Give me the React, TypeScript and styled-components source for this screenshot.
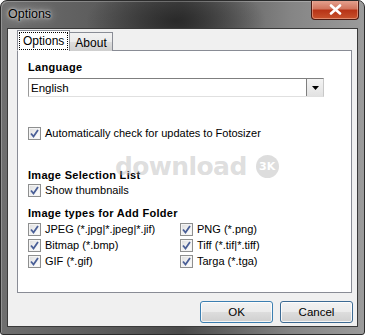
import React from "react";
import styled, { createGlobalStyle } from "styled-components";

const GlobalStyle = createGlobalStyle`
  html, body {
    margin: 0;
    padding: 0;
    background: #ffffff;
  }
  body {
    font-family: "Liberation Sans", Arial, sans-serif;
    font-size: 11px;
    color: #000;
  }
`;

const Window = styled.div`
  position: relative;
  box-sizing: border-box;
  width: 365px;
  height: 335px;
  display: flex;
  flex-direction: column;
  border: 1px solid #2b2b2b;
  border-radius: 7px 7px 3px 3px;
  overflow: hidden;
  background:
    radial-gradient(ellipse 90px 40px at 175px 20px, rgba(30, 30, 30, 0.75), rgba(30, 30, 30, 0) 100%),
    linear-gradient(90deg, #6f6f6f 0%, #5a5a5a 30%, #4a4a4a 50%, #858585 80%, #9b9b9b 100%);
  box-shadow: inset 1px 1px 0 rgba(255, 255, 255, 0.25);
`;

const TitleBar = styled.div`
  height: 27px;
  flex: none;
  display: flex;
  justify-content: space-between;
  align-items: flex-start;
`;

const Title = styled.span`
  margin: 6px 0 0 7px;
  font-family: "Liberation Sans", Arial, sans-serif;
  font-size: 12.5px;
  color: #000;
  text-shadow: 0 0 8px rgba(255, 255, 255, 0.9), 0 0 3px rgba(255, 255, 255, 0.9);
`;

const CloseButton = styled.div`
  width: 46px;
  height: 19px;
  margin: -1px 5px 0 0;
  display: flex;
  align-items: center;
  justify-content: center;
  border: 1px solid #4d1a12;
  border-top: none;
  border-radius: 0 0 4px 4px;
  background: linear-gradient(180deg, #e7a593 0%, #d2765f 45%, #b83417 55%, #c8522d 100%);
  box-shadow: inset 0 0 0 1px rgba(255, 210, 190, 0.45);
`;

const Client = styled.div`
  flex: 1;
  margin: 0 6px 7px 6px;
  display: flex;
  flex-direction: column;
  border: 1px solid #3a3a3a;
  background: #f0f0f0;
`;

const Tabs = styled.div`
  margin: 1px 5px 0 9px;
  display: flex;
  flex-direction: column;
`;

const TabStrip = styled.div`
  display: flex;
  align-items: flex-end;
  height: 21px;
  position: relative;
  z-index: 1;
`;

const Tab = styled.div<{ $active?: boolean }>`
  box-sizing: border-box;
  height: ${(p) => (p.$active ? "21px" : "19px")};
  padding: ${(p) => (p.$active ? "2px 2px 0 2px" : "3px 5px 0 5px")};
  border: 1px solid #898c95;
  border-bottom: ${(p) => (p.$active ? "1px solid #ffffff" : "none")};
  background: ${(p) =>
    p.$active
      ? "#ffffff"
      : "linear-gradient(180deg, #f2f2f2 0%, #ebebeb 50%, #dddddd 51%, #cfcfcf 100%)"};
  margin-left: ${(p) => (p.$active ? "0" : "-1px")};
  font-size: 12px;
  line-height: 14px;
`;

const FocusLabel = styled.span`
  display: block;
  padding: 0 3px;
  outline: 1px dotted #000;
  height: 16px;
  line-height: 16px;
`;

const Panel = styled.div`
  position: relative;
  box-sizing: border-box;
  height: 243px;
  margin-top: -1px;
  border: 1px solid #898c95;
  background: #ffffff;
  padding: 10px 0 0 10px;
  display: flex;
  flex-direction: column;
`;

const GroupLabel = styled.div<{ $top?: number }>`
  margin-top: ${(p) => p.$top ?? 0}px;
  font-weight: bold;
  font-size: 11px;
  line-height: 13px;
  letter-spacing: 0.3px;
`;

const Select = styled.div`
  box-sizing: border-box;
  width: 296px;
  height: 19px;
  margin-top: 4px;
  display: flex;
  border: 1px solid;
  border-color: #7f7f7f #c8c8c8 #e0e0e0 #9a9a9a;
  background: #ffffff;
`;

const SelectValue = styled.div`
  flex: 1;
  padding: 2px 0 0 2px;
  font-size: 11.5px;
  line-height: 14px;
`;

const SelectButton = styled.div`
  width: 16px;
  display: flex;
  align-items: center;
  justify-content: center;
  border-left: 1px solid #7f7f7f;
  background: linear-gradient(180deg, #f4f4f4 0%, #e2e2e2 100%);
`;

const CheckRow = styled.label<{ $top?: number }>`
  display: flex;
  align-items: center;
  gap: 4px;
  height: 16px;
  margin-top: ${(p) => p.$top ?? 0}px;
  font-size: 11px;
  white-space: nowrap;
`;

const Box = styled.span`
  box-sizing: border-box;
  width: 13px;
  height: 13px;
  flex: none;
  display: flex;
  align-items: center;
  justify-content: center;
  border: 1px solid #8e8f8f;
  background: linear-gradient(135deg, #dcdcdc 0%, #f4f4f4 60%, #ffffff 100%);
  box-shadow: inset 0 0 0 1px #f4f4f4;
`;

const TypesGrid = styled.div`
  margin-top: 1px;
  display: grid;
  grid-template-columns: 152px 1fr;
`;

const Watermark = styled.div`
  position: absolute;
  left: 97px;
  top: 101px;
  display: flex;
  align-items: center;
  gap: 9px;
  pointer-events: none;
`;

const WatermarkText = styled.span`
  font-family: "DejaVu Sans", sans-serif;
  font-weight: bold;
  font-size: 25px;
  letter-spacing: -0.6px;
  color: rgba(170, 170, 170, 0.4);
`;

const WatermarkBadge = styled.span`
  width: 23px;
  height: 23px;
  border-radius: 50%;
  display: flex;
  align-items: center;
  justify-content: center;
  background: rgba(170, 170, 170, 0.4);
  color: #ffffff;
  font-family: "DejaVu Sans", sans-serif;
  font-weight: bold;
  font-size: 11px;
`;

const ButtonRow = styled.div`
  display: flex;
  justify-content: flex-end;
  gap: 7px;
  margin: 8px 4px 0 0;
`;

const Button = styled.div<{ $default?: boolean }>`
  box-sizing: border-box;
  width: 73px;
  height: 22px;
  display: flex;
  align-items: center;
  justify-content: center;
  border: 1px solid ${(p) => (p.$default ? "#3c7fb1" : "#3c6a93")};
  border-radius: 3px;
  background: linear-gradient(180deg, #f2f2f2 0%, #ebebeb 50%, #dddddd 51%, #cfcfcf 100%);
  box-shadow: inset 0 0 0 1px rgba(255, 255, 255, 0.8);
  font-size: 11.5px;
`;

function Check() {
  return (
    <Box>
      <svg width="9" height="9" viewBox="0 0 9 9">
        <path d="M1 4.5 L3.5 7.5 L8 1" fill="none" stroke="#4a5f97" strokeWidth="1.8" />
      </svg>
    </Box>
  );
}

function CheckItem({ label, top }: { label: string; top?: number }) {
  return (
    <CheckRow $top={top}>
      <Check />
      <span>{label}</span>
    </CheckRow>
  );
}

const imageTypes = [
  "JPEG (*.jpg|*.jpeg|*.jif)",
  "PNG (*.png)",
  "Bitmap (*.bmp)",
  "Tiff (*.tif|*.tiff)",
  "GIF (*.gif)",
  "Targa (*.tga)",
];

export default function App() {
  return (
    <>
      <GlobalStyle />
      <Window>
        <TitleBar>
          <Title>Options</Title>
          <CloseButton>
            <svg width="13" height="11" viewBox="0 0 13 11">
              <path
                d="M2 1.5 L11 9.5 M11 1.5 L2 9.5"
                stroke="#ffffff"
                strokeWidth="2.6"
                strokeLinecap="round"
              />
            </svg>
          </CloseButton>
        </TitleBar>
        <Client>
          <Tabs>
            <TabStrip>
              <Tab $active>
                <FocusLabel>Options</FocusLabel>
              </Tab>
              <Tab>About</Tab>
            </TabStrip>
            <Panel>
              <GroupLabel>Language</GroupLabel>
              <Select>
                <SelectValue>English</SelectValue>
                <SelectButton>
                  <svg width="7" height="4" viewBox="0 0 7 4">
                    <path d="M0 0 H7 L3.5 4 Z" fill="#000" />
                  </svg>
                </SelectButton>
              </Select>
              <CheckItem label="Automatically check for updates to Fotosizer" top={28} />
              <GroupLabel $top={28}>Image Selection List</GroupLabel>
              <CheckItem label="Show thumbnails" top={0} />
              <GroupLabel $top={9}>Image types for Add Folder</GroupLabel>
              <TypesGrid>
                {imageTypes.map((t) => (
                  <CheckItem key={t} label={t} />
                ))}
              </TypesGrid>
              <Watermark>
                <WatermarkText>download</WatermarkText>
                <WatermarkBadge>3K</WatermarkBadge>
              </Watermark>
            </Panel>
          </Tabs>
          <ButtonRow>
            <Button $default>OK</Button>
            <Button>Cancel</Button>
          </ButtonRow>
        </Client>
      </Window>
    </>
  );
}
